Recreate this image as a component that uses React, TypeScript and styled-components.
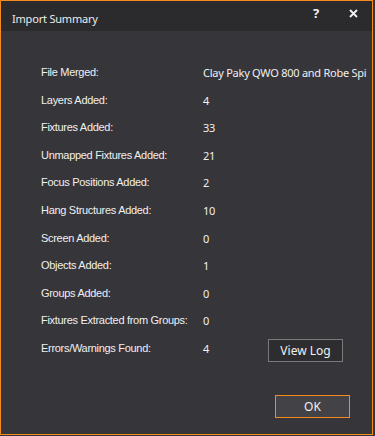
import React from "react";
import styled, { createGlobalStyle } from "styled-components";

const GlobalStyle = createGlobalStyle`
  html, body {
    margin: 0;
    padding: 0;
    background: #36353a;
  }
`;

const Window = styled.div`
  width: 373px;
  height: 435px;
  box-sizing: border-box;
  border: 1px solid #f58a1f;
  background: #36353a;
  display: flex;
  flex-direction: column;
`;

const TitleBar = styled.div`
  height: 30px;
  background: #2b2b2e;
  display: flex;
  align-items: center;
  padding-left: 11px;
  flex-shrink: 0;
`;

const Title = styled.div`
  flex: 1;
  color: #ececec;
  font-family: "Noto Sans", "Open Sans", sans-serif;
  font-size: 11px;
  letter-spacing: -0.2px;
  padding-top: 5px;
`;

const TitleButton = styled.div<{ wide?: boolean }>`
  width: ${p => (p.wide ? 38 : 36)}px;
  height: 30px;
  display: flex;
  align-items: flex-start;
  justify-content: center;
  padding-top: 5px;
  box-sizing: border-box;
  color: #f2f2f2;
  font-family: "Noto Sans", sans-serif;
  font-weight: bold;
  font-size: 13px;
  line-height: 14px;
`;

const Content = styled.div`
  flex: 1;
  padding: 28px 0 0 40px;
  display: grid;
  grid-template-columns: 162px 1fr;
  grid-auto-rows: 27.6px;
  align-content: start;
`;

const Label = styled.div`
  color: #f0f0f0;
  font-family: "Liberation Sans", Arial, sans-serif;
  font-size: 11px;
  letter-spacing: -0.3px;
  line-height: 27.6px;
  white-space: nowrap;
`;

const ValueCell = styled.div`
  display: flex;
  align-items: center;
`;

const Value = styled.div<{ fixed?: boolean }>`
  color: #f0f0f0;
  font-family: "Noto Sans", "Open Sans", sans-serif;
  font-size: 11px;
  letter-spacing: -0.25px;
  line-height: 27.6px;
  white-space: nowrap;
  ${p => (p.fixed ? "width: 65px; flex-shrink: 0;" : "")}
`;

const DialogButton = styled.button<{ primary?: boolean }>`
  width: 75px;
  height: 23px;
  box-sizing: border-box;
  border: 1px solid ${p => (p.primary ? "#f58a1f" : "#7a7a7a")};
  background: ${p => (p.primary ? "#434247" : "#2d2d30")};
  color: #f0f0f0;
  font-family: "Noto Sans", "Open Sans", sans-serif;
  font-size: 12px;
  padding: 0;
  margin: 0;
  cursor: pointer;
`;

const ViewLog = styled(DialogButton)`
  margin-top: 3px;
`;

const Footer = styled.div`
  display: flex;
  justify-content: flex-end;
  padding: 0 22px 16px 0;
`;

const rows: [string, string][] = [
  ["File Merged:", "Clay Paky QWO 800 and Robe Spi"],
  ["Layers Added:", "4"],
  ["Fixtures Added:", "33"],
  ["Unmapped Fixtures Added:", "21"],
  ["Focus Positions Added:", "2"],
  ["Hang Structures Added:", "10"],
  ["Screen Added:", "0"],
  ["Objects Added:", "1"],
  ["Groups Added:", "0"],
  ["Fixtures Extracted from Groups:", "0"],
];

export default function App() {
  return (
    <>
      <GlobalStyle />
      <Window>
        <TitleBar>
          <Title>Import Summary</Title>
          <TitleButton>?</TitleButton>
          <TitleButton wide>
            <svg width="9" height="9" viewBox="0 0 9 9" style={{ marginTop: 3 }}>
              <path d="M1 1L8 8M8 1L1 8" stroke="#f2f2f2" strokeWidth="1.8" />
            </svg>
          </TitleButton>
        </TitleBar>
        <Content>
          {rows.map(([label, value]) => (
            <React.Fragment key={label}>
              <Label>{label}</Label>
              <ValueCell>
                <Value>{value}</Value>
              </ValueCell>
            </React.Fragment>
          ))}
          <Label>Errors/Warnings Found:</Label>
          <ValueCell>
            <Value fixed>4</Value>
            <ViewLog>View Log</ViewLog>
          </ValueCell>
        </Content>
        <Footer>
          <DialogButton primary>OK</DialogButton>
        </Footer>
      </Window>
    </>
  );
}
